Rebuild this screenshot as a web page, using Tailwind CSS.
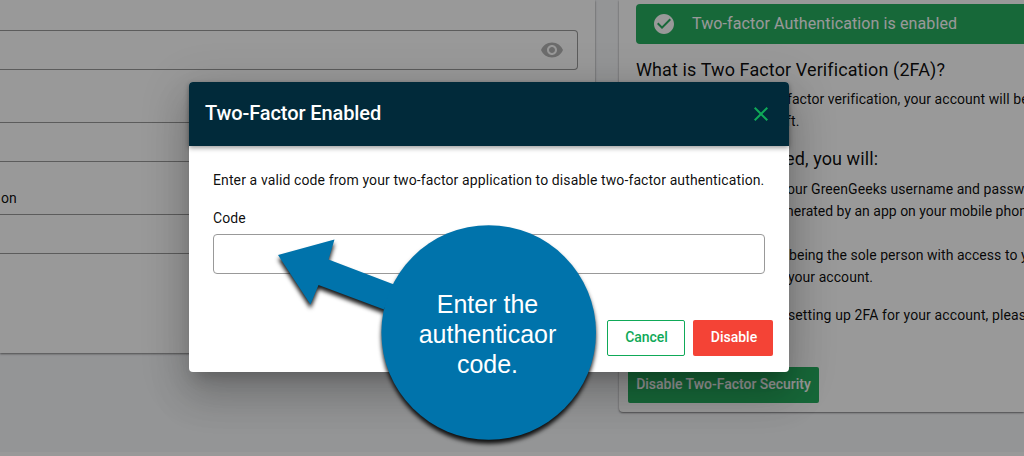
<!DOCTYPE html>
<html lang="en">
<head>
  <meta charset="UTF-8" />
  <title>Two-Factor Authentication</title>
  <script src="https://cdn.jsdelivr.net/npm/@tailwindcss/browser@4"></script>
</head>

<body class="relative w-[1024px] h-[456px] overflow-hidden bg-[#f7f8fb] text-black/95 text-sm tracking-[0.11px] font-['Roboto','Liberation_Sans',sans-serif]">

  <!-- Page -->
  <div class="flex flex-col h-[456px]">
    <div class="flex items-start gap-6 h-[452px] overflow-hidden">

      <!-- Password form -->
      <section class="w-[595px] h-[353px] pr-[17px] pt-[30px] bg-white shadow-[0_1px_2px_rgba(0,0,0,0.5)] shrink-0">
        <div class="flex items-center justify-end h-10 pr-[13px] border border-l-0 border-[#999] rounded-r">
          <svg class="w-6 h-6 text-[#b5b5b5]" viewBox="0 0 24 24" fill="currentColor">
            <path d="M12 4.5C7 4.5 2.73 7.61 1 12c1.73 4.39 6 7.5 11 7.5s9.27-3.11 11-7.5c-1.73-4.39-6-7.5-11-7.5zM12 17c-2.76 0-5-2.24-5-5s2.24-5 5-5 5 2.240 5 5-2.240 5-5 5zm0-8c-1.660 0-3 1.340-3 3s1.340 3 3 3 3-1.340 3-3-1.340-3-3-3z"/>
          </svg>
        </div>
        <div class="mt-[52px] h-10 border border-l-0 border-[#999] rounded-r"></div>
        <p class="mt-[26px] h-[26px] pl-px leading-[20px]">on</p>
        <div class="h-10 border border-l-0 border-[#999] rounded-r"></div>
      </section>

      <!-- 2FA status -->
      <section class="w-[405px] h-[412px] pt-1 pl-[9px] bg-white rounded-bl shadow-[0_1px_2px_rgba(0,0,0,0.5)] shrink-0">
        <div class="ml-2 flex items-center h-10 pl-4 gap-4 bg-[#27ae60] text-white text-base rounded-l">
          <svg class="w-6 h-6" viewBox="0 0 24 24" fill="currentColor">
            <path d="M12 2C6.480 2 2 6.480 2 12s4.480 10 10 10 10-4.480 10-10S17.520 2 12 2zm-2 15l-5-5 1.410-1.410L10 14.170l7.590-7.590L19 8l-9 9z"/>
          </svg>
          <span>Two-factor Authentication is enabled</span>
        </div>
        <div class="ml-2 whitespace-nowrap leading-[22px]">
          <h2 class="mt-[14px] h-[24px] text-lg leading-[24px]">What is Two Factor Verification (2FA)?</h2>
          <p class="mt-[6px] pl-[151px] tracking-[0.05px]">factor verification, your account will be</p>
          <p class="pl-[150px]">ft.</p>
          <h2 class="mt-[14px] pl-[149px] text-lg leading-[26px]">ed, you will:</h2>
          <p class="mt-[6px] pl-[151px] tracking-[0.05px]">our GreenGeeks username and passw</p>
          <p class="pl-[150px] tracking-normal">nerated by an app on your mobile phon</p>
          <p class="mt-[22px] pl-[153px] tracking-[0.05px]">being the sole person with access to y</p>
          <p class="pl-[152px] tracking-[0.05px]">your account.</p>
          <p class="mt-[16px] pl-[152px]">setting up 2FA for your account, pleas</p>
        </div>
        <button class="mt-[41px] block w-[191px] h-9 pb-0.5 bg-[#27ae60] text-white font-medium tracking-[-0.02px] rounded-xs whitespace-nowrap">Disable Two-Factor Security</button>
      </section>
    </div>
    <footer class="h-1 bg-white"></footer>
  </div>

  <!-- Backdrop -->
  <div class="absolute inset-0 bg-black/40"></div>

  <!-- Dialog -->
  <div class="absolute left-[189px] top-[82px] w-[600px] h-[290px] flex flex-col bg-white rounded shadow-[0_11px_15px_-7px_rgba(0,0,0,0.2),0_24px_38px_3px_rgba(0,0,0,0.14),0_9px_46px_8px_rgba(0,0,0,0.12)]">
    <header class="flex items-center justify-between h-16 pl-4 pr-4 bg-[#012a3a] text-white rounded-t shadow-[0_2px_5px_rgba(0,0,0,0.4)]">
      <h1 class="text-xl font-medium tracking-[-0.1px] -mt-0.5">Two-Factor Enabled</h1>
      <svg class="w-6 h-6 text-[#0fa958]" viewBox="0 0 24 24" fill="currentColor">
        <path d="M19 6.410L17.590 5 12 10.590 6.410 5 5 6.410 10.590 12 5 17.590 6.410 19 12 13.410 17.590 19 19 17.590 13.410 12z"/>
      </svg>
    </header>
    <div class="px-6 pt-6">
      <p class="leading-5 whitespace-nowrap">Enter a valid code from your two-factor application to disable two-factor authentication.</p>
      <label class="block mt-[18px] leading-5">Code</label>
      <div class="mt-[6px] h-10 border border-[#999] rounded"></div>
    </div>
    <div class="mt-auto flex justify-end gap-2 p-4 tracking-[-0.02px]">
      <button class="w-[78px] h-9 pb-0.5 pl-px border border-[#0fa958] text-[#0fa958] font-medium rounded-xs">Cancel</button>
      <button class="w-20 h-9 pb-0.5 pl-0.5 bg-[#f44336] text-white font-medium rounded-xs">Disable</button>
    </div>
  </div>

  <!-- Callout -->
  <svg class="absolute left-0 top-0 drop-shadow-[0_4px_2px_rgba(0,0,0,0.9)]" width="1024" height="456" viewBox="0 0 1024 456" fill="#0073ab">
    <path d="M278 255L334.500 239.500L328.500 259.500L394 284.500L384 309.500L318.500 285L310.500 304.500Z"/>
    <circle cx="488.700" cy="332.500" r="107.300"/>
  </svg>
  <p class="absolute left-[380px] top-[289px] w-[215px] text-center text-white text-[25px] leading-[30px] tracking-normal font-['Liberation_Sans',Arial,sans-serif]">Enter the<br>authenticaor<br>code.</p>

</body>
</html>
